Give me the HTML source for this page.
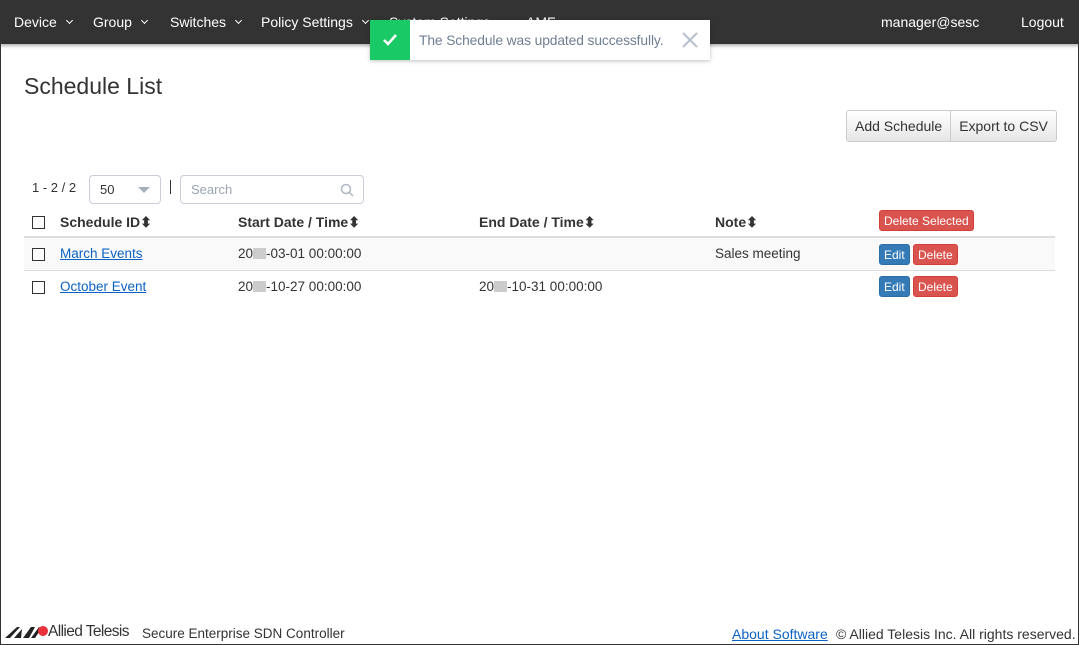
<!DOCTYPE html>
<html><head><meta charset="utf-8"><style>
*{box-sizing:border-box;margin:0;padding:0}
body{width:1079px;height:645px;overflow:hidden;font-family:"Liberation Sans",sans-serif;font-size:13px;color:#333;background:#fff;position:relative}
.frame{position:absolute;left:0;top:0;width:1079px;height:645px;border:1px solid #333;border-top:none}
.nav{position:absolute;left:0;top:0;width:1079px;height:44px;background:#333;box-shadow:0 2px 3px rgba(0,0,0,.3);color:#fff;font-size:14px}
.nav span{position:absolute;top:14px}
.car{display:inline-block;width:5px;height:5px;border-right:1px solid #fff;border-bottom:1px solid #fff;transform:rotate(45deg);margin-left:10px;vertical-align:4px}
.toast{position:absolute;left:370px;top:20px;width:340px;height:40px;background:#fff;box-shadow:0 1px 4px rgba(0,0,0,.25);display:flex;align-items:center}
.toast .ic{width:40px;height:40px;background:#19c965;display:flex;align-items:center;justify-content:center}
.toast .t{color:#6f7e92;font-size:13.8px;margin-left:9px;letter-spacing:-.1px}
.toast .x{position:absolute right:10px;top:10px}
h1{position:absolute;left:24px;top:73px;font-size:23px;font-weight:normal;color:#333}
.btng{position:absolute;left:846px;top:110px;display:flex;height:32px;border:1px solid #ccc;border-radius:3px;background:linear-gradient(#fff,#e6e6e6);font-size:14px}
.btng div{padding:0 8px;line-height:31px}
.btng div+div{border-left:1px solid #ccc}
.cnt{position:absolute;left:32px;top:180px;font-size:13px}
.sel{position:absolute;left:89px;top:175px;width:72px;height:29px;border:1px solid #ccd;border-radius:4px;font-size:13px;padding:6px 10px}
.sel i{position:absolute;right:10px;top:11px;border-left:6px solid transparent;border-right:6px solid transparent;border-top:6px solid #a7b0bd}
.bar{position:absolute;left:170px;top:180px;width:1px;height:14px;background:#333}
.srch{position:absolute;left:180px;top:175px;width:184px;height:29px;border:1px solid #ccd;border-radius:4px;color:#9aa4b2;padding:6px 10px}
.th{position:absolute;top:214px;font-weight:bold;font-size:14px}
.cb{position:absolute;left:32px;width:13px;height:13px;border:1px solid #333;background:#fff}
.row1{position:absolute;left:24px;top:236px;width:1031px;height:35px;background:#f9f9f9;border-top:2px solid #ddd;border-bottom:1px solid #ddd}
.td{position:absolute;font-size:13.5px;white-space:nowrap}
a{color:#0b62c4;text-decoration:underline}
.blur{display:inline-block;width:13px;height:11px;background:#ccc;vertical-align:-1px}
.b{position:absolute;color:#fff;font-size:12px;border-radius:3px;height:21px;line-height:20px;padding:0 4px}
.red{background:#d9534f;border:1px solid #d43f3a}
.blue{background:#337ab7;border:1px solid #2e6da4}
.foot{position:absolute;top:626px;font-size:14px;white-space:nowrap}
</style></head><body>
<div class="nav">
<span style="left:14px">Device<i class="car"></i></span>
<span style="left:93px">Group<i class="car"></i></span>
<span style="left:170px">Switches<i class="car"></i></span>
<span style="left:261px">Policy Settings<i class="car"></i></span>
<span style="left:389px">System Settings</span>
<span style="left:526px">AMF</span>
<span style="left:881px">manager@sesc</span>
<span style="left:1021px">Logout</span>
</div>
<div class="toast"><div class="ic"><svg width="16" height="14"><path d="M2 7l4 4 8-9" stroke="#fff" stroke-width="2.6" fill="none"/></svg></div><div class="t">The Schedule was updated successfully.</div>
<svg style="position:absolute;right:10px;top:10px" width="20" height="20"><path d="M3 3l14 14M17 3L3 17" stroke="#b7c0cc" stroke-width="2"/></svg></div>
<h1>Schedule List</h1>
<div class="btng"><div>Add Schedule</div><div>Export to CSV</div></div>
<div class="cnt">1 - 2 / 2</div>
<div class="sel">50<i></i></div>
<div class="bar"></div>
<div class="srch">Search<svg style="position:absolute;right:9px;top:7px" width="14" height="14"><circle cx="6" cy="6" r="4.5" stroke="#b0b8c4" stroke-width="1.5" fill="none"/><path d="M9.5 9.5l3.5 3.5" stroke="#b0b8c4" stroke-width="1.5"/></svg></div>
<div class="cb" style="top:216px"></div>
<div class="th" style="left:60px">Schedule ID&#x2B0D;</div>
<div class="th" style="left:238px">Start Date / Time&#x2B0D;</div>
<div class="th" style="left:479px">End Date / Time&#x2B0D;</div>
<div class="th" style="left:715px">Note&#x2B0D;</div>
<div class="b red" style="left:879px;top:210px">Delete Selected</div>
<div class="row1"></div>
<div class="cb" style="top:248px"></div>
<div class="td" style="left:60px;top:246px"><a>March Events</a></div>
<div class="td" style="left:238px;top:246px">20<span class="blur"></span>-03-01 00:00:00</div>
<div class="td" style="left:715px;top:246px">Sales meeting</div>
<div class="b blue" style="left:879px;top:244px">Edit</div>
<div class="b red" style="left:913px;top:244px">Delete</div>
<div class="cb" style="top:281px"></div>
<div class="td" style="left:60px;top:279px"><a>October Event</a></div>
<div class="td" style="left:238px;top:279px">20<span class="blur"></span>-10-27 00:00:00</div>
<div class="td" style="left:479px;top:279px">20<span class="blur"></span>-10-31 00:00:00</div>
<div class="b blue" style="left:879px;top:276px">Edit</div>
<div class="b red" style="left:913px;top:276px">Delete</div>
<svg style="position:absolute;left:5px;top:625px" width="44" height="14"><path d="M0 13L12 2h3L5 13zM9 13L17 4l-1 9zM18 13l8-11h4l-6 11zM26 13l8-11 2 2-6 9z" fill="#222"/><circle cx="38" cy="6" r="5" fill="#e8313a"/></svg>
<div class="foot" style="left:48px;font-size:15.5px;letter-spacing:-.6px;top:623px">Allied Telesis</div>
<div class="foot" style="left:142px;font-size:13.5px">Secure Enterprise SDN Controller</div>
<div class="foot" style="left:732px"><a>About Software</a></div>
<div class="foot" style="left:836px">© Allied Telesis Inc. All rights reserved.</div>
<div class="frame"></div>
</body></html>
